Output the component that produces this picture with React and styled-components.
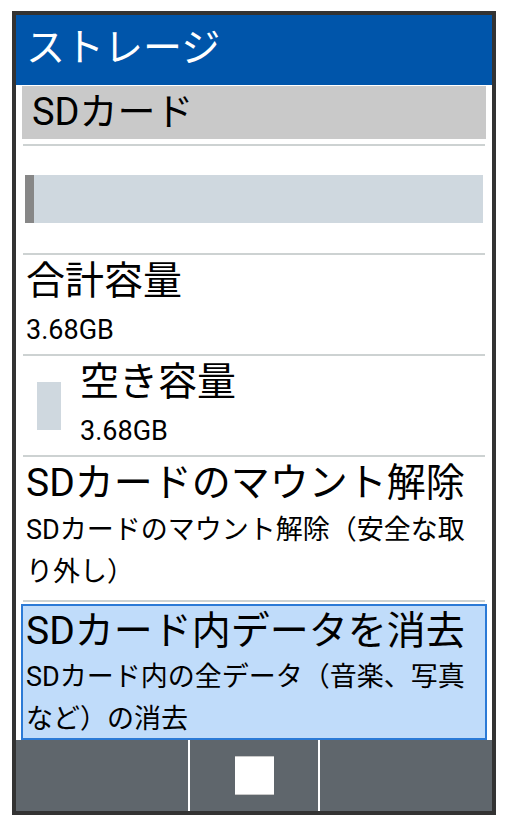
import React from 'react'
import styled, { createGlobalStyle } from 'styled-components'

const GlobalStyle = createGlobalStyle`
  html, body {
    margin: 0;
    padding: 0;
    background: #ffffff;
  }
  body {
    font-family: Roboto, "Noto Sans CJK JP", sans-serif;
  }
`

const Frame = styled.div`
  box-sizing: border-box;
  width: 484px;
  height: 804px;
  margin: 11px 0 0 12px;
  border: 4px solid #333333;
  display: flex;
  flex-direction: column;
  background: #ffffff;
  overflow: hidden;
`

const Header = styled.div`
  flex: none;
  height: 70px;
  background: #0055aa;
  color: #ffffff;
  font-size: 39px;
  line-height: 66px;
  padding-left: 10px;
`

const Section = styled.div`
  flex: none;
  height: 53px;
  margin: 1px 6px 0 6px;
  background: #c9c9c9;
  color: #000;
  font-size: 38px;
  line-height: 52px;
  padding-left: 10px;
`

const List = styled.div`
  flex: 1;
  min-height: 0;
  padding: 5px 7px 0 7px;
  display: flex;
  flex-direction: column;
  overflow: hidden;
`

const Divider = styled.div`
  flex: none;
  height: 2px;
  background: #cdd2d2;
`

const BarRow = styled.div`
  flex: none;
  height: 107px;
  box-sizing: border-box;
  padding: 29px 2px 0 2px;
`

const Bar = styled.div`
  height: 48px;
  background: #cfd8df;
  display: flex;
`

const BarFill = styled.div`
  height: 100%;
  background: #878787;
`

const Item = styled.div`
  flex: none;
  box-sizing: border-box;
  display: flex;
  align-items: center;
  height: ${p => p.$h}px;
  padding-left: ${p => (p.$swatch ? 14 : 3)}px;
  color: #000;
  ${p => p.$selected && `
    margin: 2px -2px 0 -2px;
    padding-left: 3px;
    align-items: flex-start;
    background: #c0dcfa;
    border: 2px solid #2b7ad6;
  `}
`

const Swatch = styled.div`
  flex: none;
  width: 24px;
  height: 48px;
  margin-right: 19px;
  background: #cfd8df;
`

const Texts = styled.div`
  display: flex;
  flex-direction: column;
  align-self: flex-start;
`

const Title = styled.div`
  font-size: 39px;
  line-height: ${p => p.$lh || 52}px;
  white-space: nowrap;
`

const Sub = styled.div`
  font-size: 27px;
  line-height: ${p => p.$lh || 42}px;
  white-space: nowrap;
`

const BottomBar = styled.div`
  flex: none;
  height: 71px;
  background: #5f666c;
  display: grid;
  grid-template-columns: 172px 2px 128px 2px 1fr;
`

const Sep = styled.div`
  background: #ffffff;
`

const Cell = styled.div`
  display: flex;
  align-items: center;
  justify-content: center;
`

const Square = styled.div`
  width: 39px;
  height: 39px;
  background: #ffffff;
  box-shadow: inset 0 1px 0 #c8c8c8, inset 0 -1px 0 #c8c8c8;
`

export default function App() {
  const used = 2
  return (
    <>
      <GlobalStyle />
      <Frame>
        <Header>ストレージ</Header>
        <Section>SDカード</Section>
        <List>
          <Divider />
          <BarRow>
            <Bar>
              <BarFill style={{ width: `${used}%` }} />
            </Bar>
          </BarRow>
          <Divider />
          <Item $h={99}>
            <Texts>
              <Title>合計容量</Title>
              <Sub $lh={47}>3.68GB</Sub>
            </Texts>
          </Item>
          <Divider />
          <Item $h={99} $swatch>
            <Swatch />
            <Texts>
              <Title>空き容量</Title>
              <Sub $lh={47}>3.68GB</Sub>
            </Texts>
          </Item>
          <Divider />
          <Item $h={143}>
            <Texts>
              <Title>SDカードのマウント解除</Title>
              <Sub>SDカードのマウント解除（安全な取<br />り外し）</Sub>
            </Texts>
          </Item>
          <Divider />
          <Item $h={136} $selected>
            <Texts>
              <Title $lh={50}>SDカード内データを消去</Title>
              <Sub>SDカード内の全データ（音楽、写真<br />など）の消去</Sub>
            </Texts>
          </Item>
        </List>
        <BottomBar>
          <Cell />
          <Sep />
          <Cell>
            <Square />
          </Cell>
          <Sep />
          <Cell />
        </BottomBar>
      </Frame>
    </>
  )
}
